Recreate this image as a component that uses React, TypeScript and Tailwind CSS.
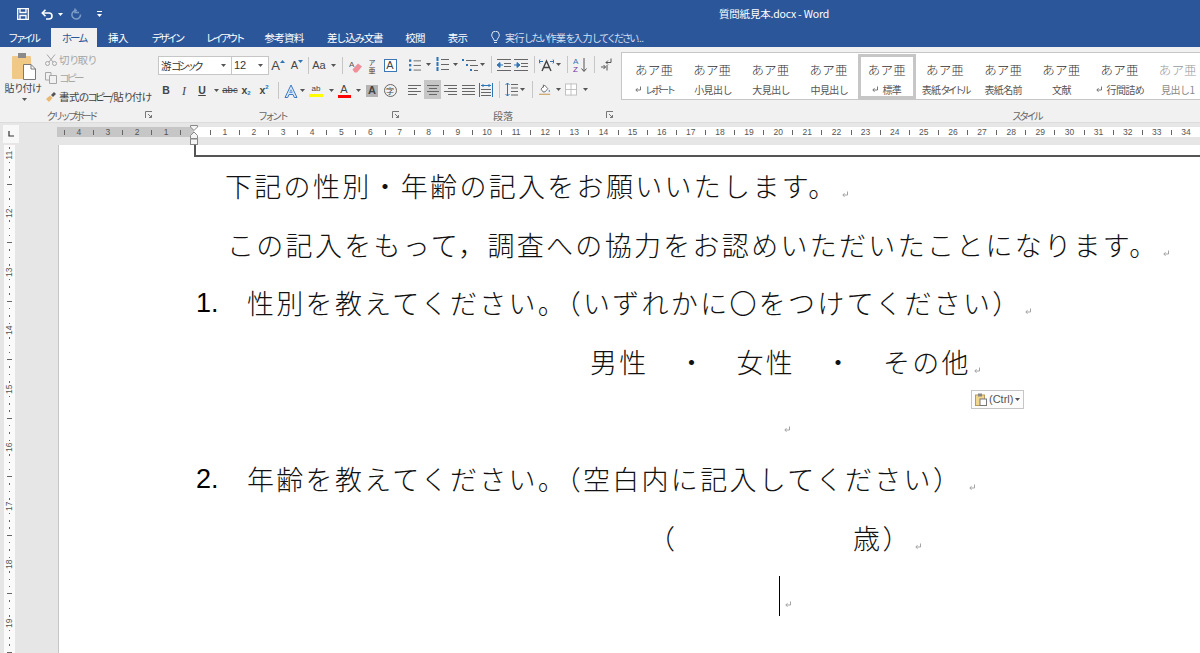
import React from "react";

const jp = "font-['Noto_Sans_CJK_JP','Noto_Sans',sans-serif]";

const tabs = [
  { label: "ファイル", cls: "w-[46px] mr-[5px] tracking-[-3px]" },
  { label: "ホーム", cls: "w-[46px] bg-[#f1f1f1] text-[#2b579a] tracking-[-2.2px]" },
  { label: "挿入", cls: "w-[42px] tracking-[-0.5px]" },
  { label: "デザイン", cls: "w-[56px] tracking-[-2.7px]" },
  { label: "レイアウト", cls: "w-[58px] tracking-[-3.2px]" },
  { label: "参考資料", cls: "w-[62px] tracking-[-0.7px]" },
  { label: "差し込み文書", cls: "w-[79px] tracking-[-1.3px]" },
  { label: "校閲", cls: "w-[42px] tracking-[-0.7px]" },
  { label: "表示", cls: "w-[43px] tracking-[-0.7px]" },
];

const styleItems = [
  { label: "レポート", mark: true },
  { label: "小見出し" },
  { label: "大見出し" },
  { label: "中見出し" },
  { label: "標準", mark: true, selected: true },
  { label: "表紙タイトル" },
  { label: "表紙名前" },
  { label: "文献" },
  { label: "行間詰め", mark: true },
  { label: "見出し 1", faded: true },
];

// UI font of the ribbon sets kana much narrower than kanji
function N({ text, hira = "tracking-[-2px]" }: { text: string; hira?: string }) {
  const parts = text.match(/[ァ-ヶー]+|[ぁ-ん]+|[^ァ-ヶーぁ-ん]+/g) ?? [];
  return (
    <span className="whitespace-pre">
      {parts.map((p, i) => {
        let cls = "tracking-[-0.6px]";
        if (/^[ァ-ヶー]/.test(p)) cls = "tracking-[-3px]";
        else if (/^[ぁ-ん]/.test(p)) cls = hira;
        return (
          <span key={i} className={cls}>
            {p}
          </span>
        );
      })}
    </span>
  );
}

function Caret({ color = "#555" }: { color?: string }) {
  return (
    <svg width="5" height="3" viewBox="0 0 5 3">
      <path d="M0 0h5L2.5 3z" fill={color} />
    </svg>
  );
}

function Cell({ className, children }: { className: string; children?: React.ReactNode }) {
  return <div className={"flex items-center justify-center shrink-0 h-[19px] " + className}>{children}</div>;
}

function Sep() {
  return <div className="w-px h-[17px] bg-[#c6c6c6]" />;
}

function Launcher() {
  return (
    <svg width="8" height="8" viewBox="0 0 8 8" fill="none" stroke="#777" strokeWidth="1">
      <path d="M0.5 7V0.5H7" />
      <path d="M3 3l3.5 3.5M6.5 4v2.5H4" />
    </svg>
  );
}

function Lines({ rows }: { rows: [number, number][] }) {
  return (
    <svg width="14" height="14" viewBox="0 0 14 14" stroke="#666" strokeWidth="1">
      {rows.map(([a, b], i) => (
        <path key={i} d={`M${a} ${2.5 + i * 3}H${b}`} />
      ))}
    </svg>
  );
}

function Bullets() {
  return (
    <svg width="13" height="14" viewBox="0 0 13 14">
      {[2, 7, 12].map((y) => (
        <g key={y}>
          <rect x="0" y={y - 1} width="2.5" height="2.5" fill="#2e75b6" />
          <path d={`M5 ${y}.5H13`} stroke="#666" />
        </g>
      ))}
    </svg>
  );
}

function Numbered() {
  return (
    <svg width="13" height="15" viewBox="0 0 13 15">
      {[2, 7, 12].map((y) => (
        <g key={y}>
          <rect x="0.5" y={y - 2} width="2" height="4" fill="#2e75b6" />
          <path d={`M5 ${y}.5H13`} stroke="#666" />
        </g>
      ))}
    </svg>
  );
}

function Multilevel() {
  return (
    <svg width="16" height="14" viewBox="0 0 16 14">
      <rect x="0" y="1" width="2" height="2" fill="#2e75b6" />
      <rect x="4" y="6" width="2" height="2" fill="#2e75b6" />
      <rect x="8" y="11" width="2" height="2" fill="#2e75b6" />
      <path d="M4 2.5H14M8 7.5H16M12 12.5H16" stroke="#666" />
    </svg>
  );
}

function Indent({ flip }: { flip?: boolean }) {
  return (
    <svg width="14" height="12" viewBox="0 0 14 12">
      <path d="M0 .5H14M7 4.5H14M7 7.5H14M0 11.5H14" stroke="#666" />
      <path d={flip ? "M0 6H3M3 3.5L6 6L3 8.5z" : "M6 6H3M3 3.5L0 6L3 8.5z"} stroke="#2e75b6" fill="#2e75b6" />
    </svg>
  );
}

function Mark({ color = "#9a9a9a" }: { color?: string }) {
  return (
    <svg width="7" height="7" viewBox="0 0 7 7" fill="none" stroke={color} strokeWidth="0.9">
      <path d="M5.5 0.5V4H1" />
      <path d="M2.5 2.2L0.8 4L2.5 5.8" />
    </svg>
  );
}

function GrowA({ size, down }: { size: string; down?: boolean }) {
  return (
    <>
      <span className={"font-['Liberation_Sans'] text-[#444] " + size}>A</span>
      <svg className="-mt-[9px]" width="5" height="3" viewBox="0 0 5 3">
        <path d={down ? "M0 0h5L2.5 3z" : "M0 3h5L2.5 0z"} fill="#2e75b6" />
      </svg>
    </>
  );
}

function RibbonRowFont1() {
  return (
    <div className="flex items-center h-[19px]">
      <div className="w-[74px] h-[19px] bg-white border border-[#c6c6c6] flex items-center justify-between pl-[2px] pr-[5px] text-[10.5px] text-[#333]">
        <N text="游ゴシック" />
        <Caret />
      </div>
      <div className="w-[37px] h-[19px] bg-white border border-l-0 border-[#c6c6c6] flex items-center justify-between pl-[2px] pr-[5px] font-['Liberation_Sans'] text-[11px] text-[#333]">
        12
        <Caret />
      </div>
      <Cell className="w-[18px]">
        <GrowA size="text-[13px]" />
      </Cell>
      <Cell className="w-[20px]">
        <GrowA size="text-[11px]" down />
      </Cell>
      <Cell className="w-[2px]">
        <Sep />
      </Cell>
      <Cell className="w-[20px] font-['Liberation_Sans'] text-[11px] text-[#444]">Aa</Cell>
      <Cell className="w-[8px]">
        <Caret />
      </Cell>
      <Cell className="w-[10px]">
        <Sep />
      </Cell>
      <Cell className="w-[18px]">
        <svg width="14" height="14" viewBox="0 0 14 14">
          <text x="0" y="7.5" fontSize="8" fill="#555" fontFamily="Liberation Sans">A</text>
          <path d="M3.5 10.5L9 4.5L13 7.5L8 13.5H5.5z" fill="#ee8f9a" />
        </svg>
      </Cell>
      <Cell className="w-[14px] flex-col text-[7px] text-[#444]">
        <span className="leading-[8px] h-[8px]">ア</span>
        <span className="leading-[8px] h-[8px]">亜</span>
      </Cell>
      <Cell className="w-[22px]">
        <div className="w-[13px] h-[13px] border border-[#3b78b5] bg-white flex items-center justify-center font-['Liberation_Sans'] text-[11px] text-[#444]">
          A
        </div>
      </Cell>
    </div>
  );
}

function RibbonRowFont2() {
  return (
    <div className="flex items-center h-[19px] font-['Liberation_Sans'] text-[#444]">
      <Cell className="w-[16px] font-bold text-[10.5px]">B</Cell>
      <Cell className="w-[20px] italic font-['Liberation_Serif'] text-[12px]">I</Cell>
      <Cell className="w-[16px] underline font-bold text-[10.5px]">U</Cell>
      <Cell className="w-[12px]">
        <Caret />
      </Cell>
      <Cell className="w-[16px] line-through text-[9.5px]">abc</Cell>
      <Cell className="w-[16px] text-[10.5px] font-bold">
        x<span className="text-[6px] text-[#2e75b6] mt-[6px]">2</span>
      </Cell>
      <Cell className="w-[20px] text-[10.5px] font-bold">
        x<span className="text-[6px] text-[#2e75b6] -mt-[6px]">2</span>
      </Cell>
      <Cell className="w-[9px]">
        <Sep />
      </Cell>
      <Cell className="w-[16px]">
        <svg width="14" height="14" viewBox="0 0 14 14" fill="none">
          <path d="M1 13.5L7 1L13 13.5H10.3L9 10.5H5L3.7 13.5z" fill="#dbe8f6" stroke="#3b78c5" />
          <path d="M5.8 8.5H8.2L7 5.8z" fill="#fff" stroke="#3b78c5" strokeWidth="0.7" />
        </svg>
      </Cell>
      <Cell className="w-[6px]">
        <Caret />
      </Cell>
      <Cell className="w-[22px]">
        <div className="flex flex-col items-center w-[14px]">
          <span className="text-[8px] leading-[10px]">ab</span>
          <div className="w-[14px] h-[3px] bg-[#ffff00]" />
        </div>
      </Cell>
      <Cell className="w-[8px]">
        <Caret />
      </Cell>
      <Cell className="w-[18px]">
        <div className="flex flex-col items-center w-[13px]">
          <span className="text-[11px] leading-[11px]">A</span>
          <div className="w-[13px] h-[3px] bg-[#ff0000]" />
        </div>
      </Cell>
      <Cell className="w-[10px]">
        <Caret />
      </Cell>
      <Cell className="w-[18px]">
        <div className="w-[12px] h-[12px] bg-[#b4b4b4] flex items-center justify-center text-[11px] font-bold text-[#444]">A</div>
      </Cell>
      <Cell className="w-[18px]">
        <div className={"w-[13px] h-[13px] rounded-full border border-[#666] flex items-center justify-center text-[8px] " + jp}>字</div>
      </Cell>
    </div>
  );
}

function RibbonRowPara1() {
  return (
    <div className="flex items-center h-[19px] pl-[7px]">
      <Cell className="w-[12px]">
        <Bullets />
      </Cell>
      <Cell className="w-[14px]">
        <Caret />
      </Cell>
      <Cell className="w-[14px]">
        <Numbered />
      </Cell>
      <Cell className="w-[12px]">
        <Caret />
      </Cell>
      <Cell className="w-[18px]">
        <Multilevel />
      </Cell>
      <Cell className="w-[7px]">
        <Caret />
      </Cell>
      <Cell className="w-[10px]">
        <Sep />
      </Cell>
      <Cell className="w-[16px]">
        <Indent />
      </Cell>
      <Cell className="w-[18px]">
        <Indent flip />
      </Cell>
      <Cell className="w-[8px]">
        <Sep />
      </Cell>
      <Cell className="w-[16px]">
        <svg width="15" height="14" viewBox="0 0 15 14" fill="none">
          <path d="M0 3.5H4M11 3.5H15M1 1.5L0 3.5L1 5.5M14 1.5L15 3.5L14 5.5" stroke="#2e75b6" />
          <path d="M3 13L7.5 3L12 13M5 9.5H10" stroke="#444" strokeWidth="1.4" />
        </svg>
      </Cell>
      <Cell className="w-[8px]">
        <Caret />
      </Cell>
      <Cell className="w-[10px]">
        <Sep />
      </Cell>
      <Cell className="w-[16px]">
        <svg width="15" height="16" viewBox="0 0 15 16" fill="none">
          <text x="0" y="7" fontSize="8" fill="#2e75b6" fontFamily="Liberation Sans">A</text>
          <text x="0" y="15" fontSize="8" fill="#7030a0" fontFamily="Liberation Sans">Z</text>
          <path d="M11 1V14M8.5 11.5L11 14.5L13.5 11.5" stroke="#555" />
        </svg>
      </Cell>
      <Cell className="w-[12px]">
        <Sep />
      </Cell>
      <Cell className="w-[12px]">
        <svg width="12" height="13" viewBox="0 0 12 13" fill="none" stroke="#555">
          <path d="M11 .5V4.5H6M8 2.5L6 4.5L8 6.5" />
          <path d="M1 9H5.5M3.5 7L5.5 9L3.5 11M7 7V12.5" />
        </svg>
      </Cell>
    </div>
  );
}

function RibbonRowPara2() {
  return (
    <div className="flex items-center h-[19px] pl-[4px]">
      <Cell className="w-[18px]">
        <Lines rows={[[0, 13], [0, 9], [0, 13], [0, 9]]} />
      </Cell>
      <Cell className="w-[17px] bg-[#c6c6c6]">
        <Lines rows={[[1, 13], [3, 11], [1, 13], [3, 11]]} />
      </Cell>
      <Cell className="w-[18px]">
        <Lines rows={[[1, 14], [5, 14], [1, 14], [5, 14]]} />
      </Cell>
      <Cell className="w-[18px]">
        <Lines rows={[[1, 14], [1, 14], [1, 14], [1, 14]]} />
      </Cell>
      <Cell className="w-[18px]">
        <svg width="14" height="14" viewBox="0 0 14 14">
          <path d="M.5 0V14M13.5 0V14" stroke="#2e75b6" />
          <path d="M2 2.5H12M3 2.5l1.5-1.5M3 2.5L4.5 4M11 2.5L9.5 1M11 2.5L9.5 4" stroke="#2e75b6" fill="none" />
          <path d="M2 6.5H12M2 9.5H12M2 12.5H12" stroke="#666" />
        </svg>
      </Cell>
      <Cell className="w-[8px]">
        <Sep />
      </Cell>
      <Cell className="w-[16px]">
        <svg width="13" height="15" viewBox="0 0 13 15" fill="none">
          <path d="M2.5 1V14M.5 3L2.5 1L4.5 3M.5 12L2.5 14L4.5 12" stroke="#2e75b6" />
          <path d="M6 2.5H13M6 6H13M6 9.5H13M6 13H13" stroke="#666" />
        </svg>
      </Cell>
      <Cell className="w-[6px]">
        <Caret />
      </Cell>
      <Cell className="w-[14px]">
        <Sep />
      </Cell>
      <Cell className="w-[12px]">
        <svg width="15" height="15" viewBox="0 0 15 15" fill="none">
          <path d="M2.5 7L7 2L11 6.5L7.5 10.5H5z" fill="#fff" stroke="#555" />
          <path d="M5.5 1.5V5" stroke="#555" />
          <path d="M12.5 7.5c1 1.5 1.3 2 .8 2.8s-1.9 0-.8-2.8z" fill="#3b78c5" />
          <path d="M0 13.5H14" stroke="#caa56a" strokeWidth="1.5" />
        </svg>
      </Cell>
      <Cell className="w-[14px]">
        <Caret />
      </Cell>
      <Cell className="w-[12px]">
        <svg width="13" height="13" viewBox="0 0 13 13" fill="#fff" stroke="#bdbdbd">
          <rect x=".5" y=".5" width="12" height="12" />
          <path d="M6.5 0V13M0 6.5H13" />
        </svg>
      </Cell>
      <Cell className="w-[16px]">
        <Caret />
      </Cell>
    </div>
  );
}

function Group({
  className,
  label,
  labelClass,
  launcher,
  children,
}: {
  className: string;
  label: string;
  labelClass: string;
  launcher?: boolean;
  children: React.ReactNode;
}) {
  return (
    <div className={"flex flex-col shrink-0 " + className}>
      <div className="h-[62px]">{children}</div>
      <div className="flex h-[14px] items-center">
        <div className={"text-center text-[10px] text-[#666] shrink-0 " + labelClass}>{label}</div>
        {launcher && (
          <div className="flex-1 flex justify-center">
            <Launcher />
          </div>
        )}
      </div>
    </div>
  );
}

function Ribbon() {
  return (
    <div className={"flex h-[76px] bg-[#f1f1f1] overflow-hidden border-b border-[#dcdcdc] " + jp}>
      <Group className="w-[155px]" label="クリップボード" labelClass="w-[142px] tracking-[-3px]" launcher>
        <div className="flex">
          <div className="w-[45px] shrink-0 flex flex-col items-center pt-[6px]">
            <svg className="ml-[3px]" width="24" height="27" viewBox="0 0 24 27">
              <rect x="0" y="3" width="19" height="23" rx="1" fill="#f0c987" />
              <rect x="6" y="0" width="8" height="5" fill="#8a8a8a" />
              <path d="M11.5 11.5H19L23.5 16V26.5H11.5z" fill="#fff" stroke="#7a7a7a" />
              <path d="M19 11.5V16H23.5" fill="none" stroke="#7a7a7a" />
            </svg>
            <span className="text-[10px] leading-[14px] mt-[1px] text-[#444] whitespace-nowrap">
              <N text="貼り付け" hira="tracking-[-1.5px]" />
            </span>
            <div className="mt-[3px] ml-[3px]">
              <Caret />
            </div>
          </div>
          <div className="flex flex-col pt-[4px] text-[10.5px] whitespace-nowrap">
            <div className="flex items-center h-[18px] gap-[2px] text-[#a6a6a6]">
              <svg width="12" height="12" viewBox="0 0 12 12" fill="none" stroke="#a6a6a6">
                <path d="M2 .5L8 8M10 .5L4 8" />
                <circle cx="2.5" cy="9.5" r="2" />
                <circle cx="9.5" cy="9.5" r="2" />
              </svg>
              <N text="切り取り" />
            </div>
            <div className="flex items-center h-[18px] gap-[2px] text-[#a6a6a6]">
              <svg width="12" height="12" viewBox="0 0 12 12" fill="none" stroke="#a6a6a6">
                <path d="M.5 .5H6V8H.5z" />
                <path d="M4.5 3.5H11.5V11.5H4.5z" fill="#f1f1f1" />
              </svg>
              <N text="コピー" />
            </div>
            <div className="flex items-center h-[19px] gap-[2px] text-[#444]">
              <svg width="12" height="12" viewBox="0 0 12 12">
                <path d="M6 4L9 1L11 3L8 6z" fill="#555" />
                <path d="M1 8L5 4.5L7.5 7L4 11z" fill="#e9b872" />
              </svg>
              <N text="書式のコピー/貼り付け" />
            </div>
          </div>
        </div>
      </Group>
      <div className="w-px my-[3px] bg-[#d4d4d4]" />
      <Group className="w-[247px]" label="フォント" labelClass="w-[234px] tracking-[-3px]" launcher>
        <div className="flex flex-col gap-[6px] pt-[9px] pl-[3px]">
          <RibbonRowFont1 />
          <RibbonRowFont2 />
        </div>
      </Group>
      <div className="w-px my-[3px] bg-[#d4d4d4]" />
      <Group className="w-[214px]" label="段落" labelClass="w-[202px]" launcher>
        <div className="flex flex-col gap-[6px] pt-[8px]">
          <RibbonRowPara1 />
          <RibbonRowPara2 />
        </div>
      </Group>
      <div className="w-px my-[3px] bg-[#d4d4d4]" />
      <Group className="w-[816px] pl-[5px]" label="スタイル" labelClass="w-[811px] tracking-[-2.7px]">
        <div className="mt-[5px] h-[48px] w-[700px] bg-white border border-[#c6c6c6] flex items-center pl-[3px]">
          {styleItems.map((item) => (
            <div
              key={item.label}
              className={
                "w-[58.2px] h-[45px] shrink-0 flex flex-col items-center " +
                (item.selected ? "border-[3px] border-[#c6c6c6] pt-[4px]" : "pt-[7px]")
              }
            >
              <span
                className={
                  "text-[12.5px] font-light leading-[17px] tracking-[0.2px] " + (item.faded ? "text-[#999]" : "text-[#333]")
                }
              >
                あア亜
              </span>
              <span
                className={
                  "flex items-center gap-[3px] text-[10px] leading-[14px] mt-[5px] whitespace-nowrap " +
                  (item.faded ? "text-[#888]" : "text-[#555]")
                }
              >
                {item.mark && <Mark color="#666" />}
                <N text={item.label} />
              </span>
            </div>
          ))}
        </div>
      </Group>
    </div>
  );
}

function HRuler() {
  const dark = [null, 4, null, 3, null, 2, null, 1, null];
  const light: (number | null)[] = [];
  for (let i = 1; i <= 34; i++) {
    light.push(null, i);
  }
  const mark = (v: number | null, i: number) => (
    <div key={i} className="w-[14.575px] shrink-0 flex justify-center items-center">
      {v === null ? <div className="w-px h-[5px] bg-[#666]" /> : <span className="text-[8.5px] text-[#555]">{v}</span>}
    </div>
  );
  return (
    <div className="relative flex h-[22px] bg-[#e6e6e6] overflow-hidden">
      <div className="w-[57px] shrink-0 pl-[3px] pt-[2px]">
        <div className="w-[16px] h-[18px] bg-[#f8f8f8] flex items-center justify-center">
          <svg width="6" height="6" viewBox="0 0 6 6" fill="none" stroke="#333" strokeWidth="1.2">
            <path d="M1 0V5H6" />
          </svg>
        </div>
      </div>
      <div className="mt-[4px] h-[10px] flex font-['Liberation_Sans'] overflow-hidden flex-1">
        <div className="w-[137px] shrink-0 bg-[#c6c6c6] flex">{dark.map(mark)}</div>
        <div className="flex-1 bg-white flex pl-[9px]">{light.map(mark)}</div>
      </div>
      <svg className="absolute left-[190px] top-[2px]" width="8" height="20" viewBox="0 0 8 20">
        <path d="M.5 .5H7.5V2L4 5.5L.5 2z" fill="#f4f4f4" stroke="#888" />
        <path d="M4 7L7.5 10.5V13.5H.5V10.5z" fill="#f4f4f4" stroke="#888" />
        <rect x=".5" y="14" width="7" height="5.5" fill="#f4f4f4" stroke="#888" />
      </svg>
    </div>
  );
}

function VRuler() {
  const cms = [10, 11, 12, 13, 14, 15, 16, 17, 18, 19];
  return (
    <div className="w-[58px] shrink-0 bg-[#e6e6e6] pl-[4px] overflow-hidden">
      <div className="w-[11px] h-full bg-[#fafafa] overflow-hidden font-['Liberation_Sans']">
        <div className="-mt-[52px]">
          {cms.map((cm) => (
            <div key={cm}>
              {[0, 1, 2, 3, 4, 5, 6, 7].map((i) => (
                <div key={i} className="h-[7.325px] flex items-center justify-center">
                  {i === 0 ? (
                    <span className="-rotate-90 text-[8.5px] text-[#555] leading-none">{cm}</span>
                  ) : i === 4 ? (
                    <div className="w-[5px] h-px bg-[#666]" />
                  ) : (
                    <div className="w-[1.5px] h-[1.5px] bg-[#666]" />
                  )}
                </div>
              ))}
            </div>
          ))}
        </div>
      </div>
    </div>
  );
}

function DocLine({ className, text, mark }: { className: string; text?: React.ReactNode; mark: string }) {
  return (
    <div className={"flex items-center h-[58.6px] whitespace-pre " + className}>
      {text}
      <div className={"shrink-0 mt-[17px] " + mark}>
        <Mark />
      </div>
    </div>
  );
}

function ListNo({ n }: { n: string }) {
  return <span className="font-['Liberation_Sans'] text-[27px] w-[51px] shrink-0 tracking-normal text-black">{n}</span>;
}

function Page() {
  return (
    <div className="relative flex-1 min-w-0 overflow-hidden bg-white border-l border-[#c6c6c6]">
      <div className="ml-[135px] h-[12px] border-l-2 border-b-2 border-[#555]" />
      <div className={"text-[27px] tracking-[2.3px] font-light text-[#111] " + jp}>
        <DocLine className="pl-[166px]" text="下記の性別・年齢の記入をお願いいたします。" mark="ml-[4px]" />
        <DocLine className="pl-[168px]" text="この記入をもって，調査への協力をお認めいただいたことになります。" mark="ml-[4px]" />
        <DocLine
          className="pl-[137px]"
          text={
            <>
              <ListNo n="1." />
              性別を教えてください。（いずれかに〇をつけてください）
            </>
          }
          mark="ml-[3px]"
        />
        <DocLine className="pl-[531px]" text="男性　・　女性　・　その他" mark="ml-[3px]" />
        <DocLine className="pl-[725px]" mark="" />
        <DocLine
          className="pl-[137px]"
          text={
            <>
              <ListNo n="2." />
              年齢を教えてください。（空白内に記入してください）
            </>
          }
          mark="ml-[7px]"
        />
        <DocLine className="pl-[589px]" text="（　　　　　　歳）" mark="ml-[3px]" />
        <DocLine className="pl-[720px]" text={<div className="w-px h-[40px] bg-black mr-[5px]" />} mark="" />
      </div>
      <div className="absolute left-[912px] top-[245px] w-[53px] h-[19px] bg-[#fcfcfc] border border-[#c6c6c6] flex items-center pl-[3px] gap-[2px] font-['Liberation_Sans'] text-[11px] text-[#555]">
        <svg width="12" height="13" viewBox="0 0 12 13">
          <rect x="0.5" y="2" width="9" height="10.5" fill="#f2d58f" stroke="#b99a5c" />
          <rect x="3" y="0.5" width="4" height="3" fill="#888" />
          <rect x="5" y="6" width="6.5" height="6.5" fill="#fff" stroke="#777" />
        </svg>
        (Ctrl)
        <Caret />
      </div>
    </div>
  );
}

export default function App() {
  return (
    <div className={"w-[1200px] h-[653px] flex flex-col overflow-hidden bg-white " + jp}>
      <div className="h-[28px] shrink-0 bg-[#2b579a] flex items-center text-white">
        <div className="flex items-center pl-[17px]">
          <svg width="12" height="12" viewBox="0 0 12 12" fill="none" stroke="#fff" strokeWidth="1.3">
            <path d="M.7 .7H11.3V11.3H.7z" />
            <path d="M3 .7V4.5H9V.7M3 11.3V7.5H9V11.3" />
          </svg>
          <svg className="ml-[12px]" width="13" height="11" viewBox="0 0 13 11" fill="none" stroke="#fff" strokeWidth="1.6">
            <path d="M1.5 4H8A3 3 0 0 1 8 10H5" />
            <path d="M4.5 .8L1.3 4L4.5 7.2" />
          </svg>
          <div className="ml-[4px]">
            <Caret color="#fff" />
          </div>
          <svg className="ml-[8px]" width="11" height="12" viewBox="0 0 11 12" fill="none" stroke="#7e9cc8" strokeWidth="1.5">
            <path d="M6 2.5A4.3 4.3 0 1 0 9.5 6.5" />
            <path d="M4 .5V4.5H8" />
          </svg>
          <svg className="ml-[15px]" width="5" height="6" viewBox="0 0 5 6">
            <path d="M0 .5H5" stroke="#fff" />
            <path d="M0 3h5L2.5 6z" fill="#fff" />
          </svg>
        </div>
        <div className="ml-[617px] text-[10.5px] tracking-[-0.2px]">質問紙見本.docx - Word</div>
      </div>
      <div className="h-[19px] shrink-0 bg-[#2b579a] flex items-center text-white text-[10.5px]">
        {tabs.map((t) => (
          <div key={t.label} className={"h-[19px] shrink-0 flex items-center justify-center " + t.cls}>
            {t.label}
          </div>
        ))}
        <svg className="ml-[12px] mr-[5px]" width="9" height="13" viewBox="0 0 9 13" fill="none" stroke="#dfe7f3">
          <path d="M3 9.5C3 7.5 .7 6.5 .7 4A3.8 3.8 0 0 1 8.3 4C8.3 6.5 6 7.5 6 9.5zM3 11.5H6" />
        </svg>
        <span className="text-[10px] text-[#d5dff0]">
          <N text="実行したい作業を入力してください..." hira="tracking-[-2.4px]" />
        </span>
      </div>
      <Ribbon />
      <HRuler />
      <div className="flex flex-1 min-h-0">
        <VRuler />
        <Page />
      </div>
    </div>
  );
}
